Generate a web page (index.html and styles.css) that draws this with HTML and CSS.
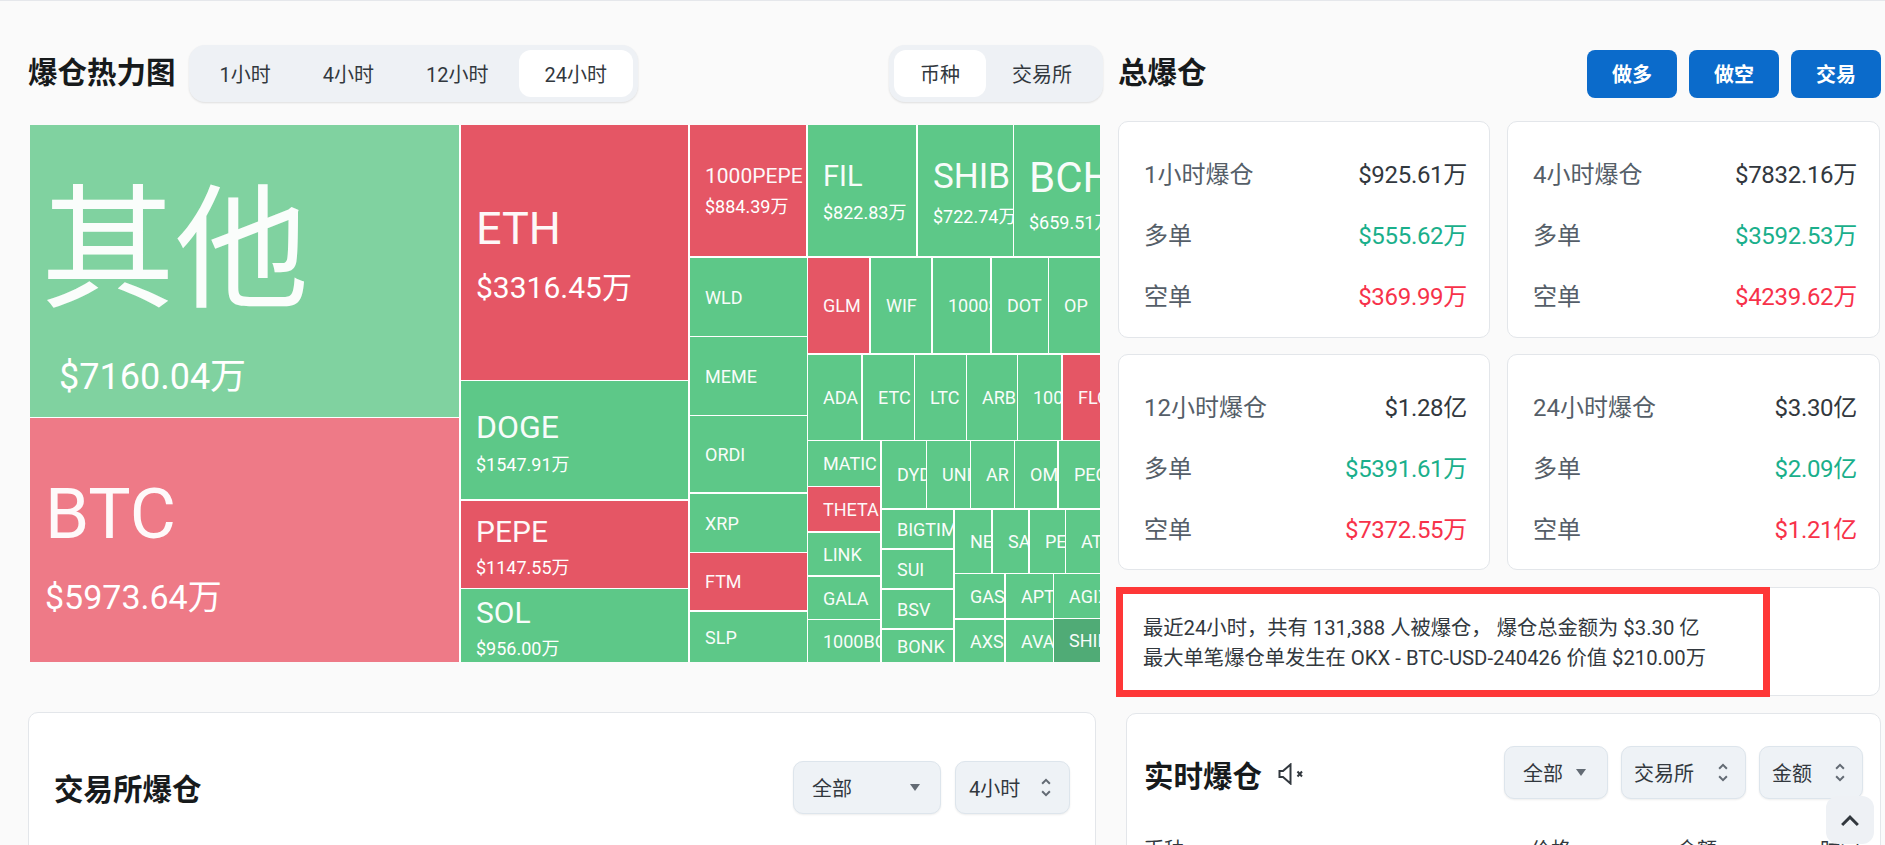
FILE: index.html
```html
<!DOCTYPE html>
<html lang="zh">
<head>
<meta charset="utf-8">
<title>爆仓热力图</title>
<link rel="stylesheet" href="styles.css">
</head>
<body>
<div class="page">
  <section class="left">
    <header class="head">
      <h1 class="title">爆仓热力图</h1>
      <div class="tabs tabs-time">
        <span class="tab">1小时</span><span class="tab">4小时</span><span class="tab">12小时</span><span class="tab active">24小时</span>
      </div>
      <div class="tabs tabs-kind">
        <span class="tab active">币种</span><span class="tab">交易所</span>
      </div>
    </header>
    <div class="map">
      <div class="c light other" style="left:0;top:0;width:429px;height:292px"><b class="n128">其他</b><i class="v36">$7160.04万</i></div>
      <div class="c pink btc" style="left:0;top:293px;width:429px;height:244px"><b class="n68">BTC</b><i class="v34">$5973.64万</i></div>
      <div class="c red eth" style="left:431px;top:0;width:227px;height:255px"><b class="n45">ETH</b><i class="v30">$3316.45万</i></div>
      <div class="c green" style="left:431px;top:256px;width:227px;height:118px"><b class="n32">DOGE</b><i>$1547.91万</i></div>
      <div class="c red" style="left:431px;top:376px;width:227px;height:87px"><b class="n30">PEPE</b><i>$1147.55万</i></div>
      <div class="c green" style="left:431px;top:464px;width:227px;height:73px"><b class="n30">SOL</b><i>$956.00万</i></div>
      <div class="c red" style="left:660px;top:0;width:116px;height:131px"><b class="n21">1000PEPE</b><i>$884.39万</i></div>
      <div class="c green" style="left:660px;top:133px;width:117px;height:78px"><b>WLD</b></div>
      <div class="c green" style="left:660px;top:212px;width:117px;height:78px"><b>MEME</b></div>
      <div class="c green" style="left:660px;top:291px;width:117px;height:76px"><b>ORDI</b></div>
      <div class="c green" style="left:660px;top:369px;width:117px;height:58px"><b>XRP</b></div>
      <div class="c red" style="left:660px;top:428px;width:117px;height:57px"><b>FTM</b></div>
      <div class="c green" style="left:660px;top:487px;width:117px;height:50px"><b>SLP</b></div>
      <div class="c green" style="left:778px;top:0;width:108px;height:131px"><b class="n29">FIL</b><i>$822.83万</i></div>
      <div class="c green" style="left:888px;top:0;width:95px;height:131px"><b class="n35">SHIB</b><i>$722.74万</i></div>
      <div class="c green" style="left:984px;top:0;width:86px;height:131px"><b class="n42">BCH</b><i>$659.51万</i></div>
      <div class="c red" style="left:778px;top:133px;width:61px;height:95px"><b>GLM</b></div>
      <div class="c green" style="left:841px;top:133px;width:60px;height:95px"><b>WIF</b></div>
      <div class="c green" style="left:903px;top:133px;width:57px;height:95px"><b>1000SATS</b></div>
      <div class="c green" style="left:962px;top:133px;width:56px;height:95px"><b>DOT</b></div>
      <div class="c green" style="left:1019px;top:133px;width:51px;height:95px"><b>OP</b></div>
      <div class="c green" style="left:778px;top:230px;width:53px;height:85px"><b>ADA</b></div>
      <div class="c green" style="left:833px;top:230px;width:51px;height:85px"><b>ETC</b></div>
      <div class="c green" style="left:885px;top:230px;width:51px;height:85px"><b>LTC</b></div>
      <div class="c green" style="left:937px;top:230px;width:50px;height:85px"><b>ARB</b></div>
      <div class="c green" style="left:988px;top:230px;width:43px;height:85px"><b>1000X</b></div>
      <div class="c red" style="left:1033px;top:230px;width:37px;height:85px"><b>FLOKI</b></div>
      <div class="c green" style="left:778px;top:316px;width:72px;height:45px"><b>MATIC</b></div>
      <div class="c red" style="left:778px;top:362px;width:72px;height:44px"><b>THETA</b></div>
      <div class="c green" style="left:778px;top:408px;width:72px;height:42px"><b>LINK</b></div>
      <div class="c green" style="left:778px;top:452px;width:72px;height:42px"><b>GALA</b></div>
      <div class="c green" style="left:778px;top:495px;width:72px;height:42px"><b>1000BONK</b></div>
      <div class="c green" style="left:852px;top:316px;width:44px;height:67px"><b>DYDX</b></div>
      <div class="c green" style="left:897px;top:316px;width:43px;height:67px"><b>UNI</b></div>
      <div class="c green" style="left:941px;top:316px;width:43px;height:67px"><b>AR</b></div>
      <div class="c green" style="left:985px;top:316px;width:42px;height:67px"><b>OMNI</b></div>
      <div class="c green" style="left:1029px;top:316px;width:41px;height:67px"><b>PEOPLE</b></div>
      <div class="c green" style="left:852px;top:385px;width:71px;height:38px"><b>BIGTIME</b></div>
      <div class="c green" style="left:852px;top:425px;width:71px;height:38px"><b>SUI</b></div>
      <div class="c green" style="left:852px;top:465px;width:71px;height:38px"><b>BSV</b></div>
      <div class="c green" style="left:852px;top:505px;width:71px;height:32px"><b>BONK</b></div>
      <div class="c green" style="left:925px;top:385px;width:36px;height:63px"><b>NEAR</b></div>
      <div class="c green" style="left:963px;top:385px;width:35px;height:63px"><b>SAND</b></div>
      <div class="c green" style="left:1000px;top:385px;width:35px;height:63px"><b>PENDLE</b></div>
      <div class="c green" style="left:1036px;top:385px;width:34px;height:63px"><b>ATOM</b></div>
      <div class="c green" style="left:925px;top:449px;width:49px;height:44px"><b>GAS</b></div>
      <div class="c green" style="left:976px;top:449px;width:47px;height:44px"><b>APT</b></div>
      <div class="c green" style="left:1024px;top:449px;width:46px;height:44px"><b>AGIX</b></div>
      <div class="c green" style="left:925px;top:495px;width:49px;height:42px"><b>AXS</b></div>
      <div class="c green" style="left:976px;top:495px;width:47px;height:42px"><b>AVAX</b></div>
      <div class="c dark" style="left:1024px;top:494px;width:46px;height:43px"><b>SHIB1</b></div>
    </div>
  </section>

  <section class="right">
    <header class="head">
      <h2 class="title">总爆仓</h2>
      <div class="btns">
        <button class="btn">做多</button><button class="btn">做空</button><button class="btn">交易</button>
      </div>
    </header>
    <div class="cards">
      <div class="card">
        <div class="row"><span>1小时爆仓</span><strong>$925.61万</strong></div>
        <div class="row"><span>多单</span><strong class="up">$555.62万</strong></div>
        <div class="row"><span>空单</span><strong class="down">$369.99万</strong></div>
      </div>
      <div class="card">
        <div class="row"><span>4小时爆仓</span><strong>$7832.16万</strong></div>
        <div class="row"><span>多单</span><strong class="up">$3592.53万</strong></div>
        <div class="row"><span>空单</span><strong class="down">$4239.62万</strong></div>
      </div>
      <div class="card">
        <div class="row"><span>12小时爆仓</span><strong>$1.28亿</strong></div>
        <div class="row"><span>多单</span><strong class="up">$5391.61万</strong></div>
        <div class="row"><span>空单</span><strong class="down">$7372.55万</strong></div>
      </div>
      <div class="card">
        <div class="row"><span>24小时爆仓</span><strong>$3.30亿</strong></div>
        <div class="row"><span>多单</span><strong class="up">$2.09亿</strong></div>
        <div class="row"><span>空单</span><strong class="down">$1.21亿</strong></div>
      </div>
    </div>
    <div class="note">
      <p>最近24小时，共有 131,388 人被爆仓， 爆仓总金额为 $3.30 亿</p>
      <p>最大单笔爆仓单发生在 OKX - BTC-USD-240426 价值 $210.00万</p>
      <div class="mark"></div>
    </div>
  </section>

  <section class="panel panel-ex">
    <div class="panel-head">
      <h2 class="title">交易所爆仓</h2>
      <div class="selects">
        <div class="sel sel-all-wide"><span>全部</span><svg class="caret" viewBox="0 0 10 7"><path d="M0 0h10L5 7z"/></svg></div>
        <div class="sel sel-time"><span>4小时</span><svg class="unfold" viewBox="7 3 10 18"><path d="M12 5.83 15.17 9l1.41-1.41L12 3 7.41 7.59 8.83 9 12 5.83zm0 12.34L8.83 15l-1.41 1.41L12 21l4.59-4.59L15.17 15 12 18.17z"/></svg></div>
      </div>
    </div>
  </section>

  <section class="panel panel-live">
    <div class="panel-head">
      <div class="live-title">
        <h2 class="title">实时爆仓</h2>
        <svg class="mute" viewBox="0 0 26 22" fill="none" stroke="#32383e" stroke-width="2"><path d="M1.500 8H5L12.500 1.500V20.500L5 14H1.500z"/><path d="M19.500 8.500l4.500 5M24 8.500l-4.500 5"/></svg>
      </div>
      <div class="selects">
        <div class="sel sel-all"><span>全部</span><svg class="caret" viewBox="0 0 10 7"><path d="M0 0h10L5 7z"/></svg></div>
        <div class="sel sel-ex"><span>交易所</span><svg class="unfold" viewBox="7 3 10 18"><path d="M12 5.83 15.17 9l1.41-1.41L12 3 7.41 7.59 8.83 9 12 5.83zm0 12.34L8.83 15l-1.41 1.41L12 21l4.59-4.59L15.17 15 12 18.17z"/></svg></div>
        <div class="sel sel-amt"><span>金额</span><svg class="unfold" viewBox="7 3 10 18"><path d="M12 5.83 15.17 9l1.41-1.41L12 3 7.41 7.59 8.83 9 12 5.83zm0 12.34L8.83 15l-1.41 1.41L12 21l4.59-4.59L15.17 15 12 18.17z"/></svg></div>
      </div>
    </div>
    <div class="thead"><span>币种</span><span>价格</span><span>金额</span><span>时间</span></div>
  </section>
</div>
<button class="top" aria-label="返回顶部"><svg viewBox="6 8 12 7.410"><path d="M7.410 15.410 12 10.830l4.590 4.580L18 14l-6-6-6 6z"/></svg></button>
</body>
</html>
```
FILE: styles.css
```css
* { box-sizing: border-box; }
html, body { margin: 0; height: 845px; overflow: hidden; }
body {
  background: #fafafa;
  border-top: 1px solid #e5e7eb;
  color: #32383e;
  font-family: Roboto, "Noto Sans CJK SC", sans-serif;
  font-size: 20px;
}
.page {
  display: grid;
  grid-template-columns: 1075px 1fr;
  column-gap: 15px;
  row-gap: 16px;
  padding: 44px 4px 0 28px;
}
.head { display: flex; align-items: center; height: 57px; }
.title { margin: 0; font-size: 29.500px; font-weight: 700; color: #171a1c; line-height: 1.2; white-space: nowrap; }

.tabs {
  display: flex;
  padding: 5px;
  background: #eef1f5;
  border-radius: 16px;
  box-shadow: 0 1px 2px rgba(21, 21, 21, .12);
  height: 57px;
}
.tabs-time { margin-left: 13px; }
.tabs-time .tab:nth-child(3) { padding-right: 30px; }
.tabs-kind { margin-left: auto; }
.tab { display: flex; align-items: center; padding: 0 26px; border-radius: 12px; white-space: nowrap; }
.tab.active { background: #fff; }

.map { position: relative; width: 1070px; height: 537px; margin: 23px 0 0 2px; background: #fff; overflow: hidden; }
.c {
  position: absolute;
  display: flex;
  flex-direction: column;
  justify-content: center;
  padding-left: 15px;
  overflow: hidden;
  white-space: nowrap;
  color: #fff;
}
.c b, .c i { font-weight: 400; font-style: normal; line-height: 1.5; }
.c b { font-size: 18px; opacity: .96; }
.c i { font-size: 18px; }
.green { background: #5dc888; }
.light { background: #80d2a0; }
.red { background: #e55665; }
.pink { background: #ee7a87; }
.dark { background: #50ab76; }
.c .n128 { font-size: 134px; }
.c .n68 { font-size: 71px; }
.c .n45 { font-size: 45px; }
.c .n42 { font-size: 42px; }
.c .n35 { font-size: 35px; }
.c .n32 { font-size: 32px; }
.c .n30 { font-size: 30px; }
.c .n29 { font-size: 29px; }
.c .n21 { font-size: 21px; }
.c .v36 { font-size: 36px; }
.c .v34 { font-size: 34px; }
.c .v30 { font-size: 30px; }
.other { padding: 12px 0 0 11px; }
.other i { margin: -2px 0 0 18px; }
.btc { padding-top: 4px; }
.btc i { margin-top: 4px; }
.eth i { margin-top: 3px; }

.btns { display: flex; gap: 12px; margin-left: auto; }
.btn {
  width: 90px;
  height: 48px;
  border: 0;
  border-radius: 8px;
  background: #0b6bcb;
  color: #fff;
  font: 700 20px Roboto, "Noto Sans CJK SC", sans-serif;
}

.cards { display: grid; grid-template-columns: 372px 373px; column-gap: 17px; row-gap: 16px; margin-top: 19px; }
.card, .note, .panel { background: #fff; border: 1px solid #e3e6ea; border-radius: 10px; }
.card { height: 217px; padding: 20px 22px 0 25px; }
.card:nth-child(n+3) { height: 216px; }
.row { display: flex; justify-content: space-between; align-items: center; height: 61px; font-size: 24px; }
.row span { color: #555e68; }
.row strong { font-weight: 400; color: #32383e; letter-spacing: -.3px; }
.row .up { color: #1aaf8b; }
.row .down { color: #f7324a; }

.note { position: relative; width: 762px; height: 109px; margin-top: 17px; padding: 25px 24px; color: #32383e; }
.note p { margin: 0; line-height: 30px; font-size: 20.300px; white-space: nowrap; }
.mark { position: absolute; left: -3px; top: -1px; width: 654px; height: 110px; border: 7px solid #fe3737; }

.panel { height: 300px; }
.panel-ex { padding: 48px 25px 0 25px; width: 1068px; }
.panel-live { padding: 32px 17px 0 17px; margin: 1px 0 0 8px; }
.panel-head { display: flex; align-items: center; justify-content: space-between; }
.panel-ex .title { margin-top: 7px; }
.live-title { display: flex; align-items: center; gap: 16px; margin-top: 10px; }
.mute { width: 26px; height: 22px; margin-top: -6px; }
.selects { display: flex; gap: 13px; }
.sel {
  display: flex;
  align-items: center;
  justify-content: space-between;
  height: 53px;
  background: #eef2f6;
  border: 1px solid #dde5ec;
  border-radius: 10px;
  box-shadow: 0 1px 2px rgba(21, 21, 21, .08);
}
.sel span { white-space: nowrap; }
.caret { width: 10px; height: 7px; fill: #636b74; }
.unfold { width: 10px; height: 19px; fill: #636b74; }
.sel-all-wide { width: 148px; padding: 0 20px 0 18px; }
.sel-time { width: 115px; padding: 0 18px 0 13px; margin-left: 1px; }
.sel-all { width: 104px; padding: 0 21px 0 18px; }
.sel-ex { width: 125px; padding: 0 17px 0 12px; }
.sel-amt { width: 104px; padding: 0 17px 0 12px; }
.thead { display: grid; grid-template-columns: 387px 146px 143px 42px; margin-top: 35px; color: #32383e; white-space: nowrap; }

.top {
  position: fixed;
  right: 11px;
  bottom: 1px;
  display: flex;
  align-items: center;
  justify-content: center;
  width: 48px;
  height: 48px;
  padding: 0;
  border: 0;
  border-radius: 12px;
  background: #eef1f5;
}
.top svg { width: 18px; height: 11px; fill: #32383e; }
```
